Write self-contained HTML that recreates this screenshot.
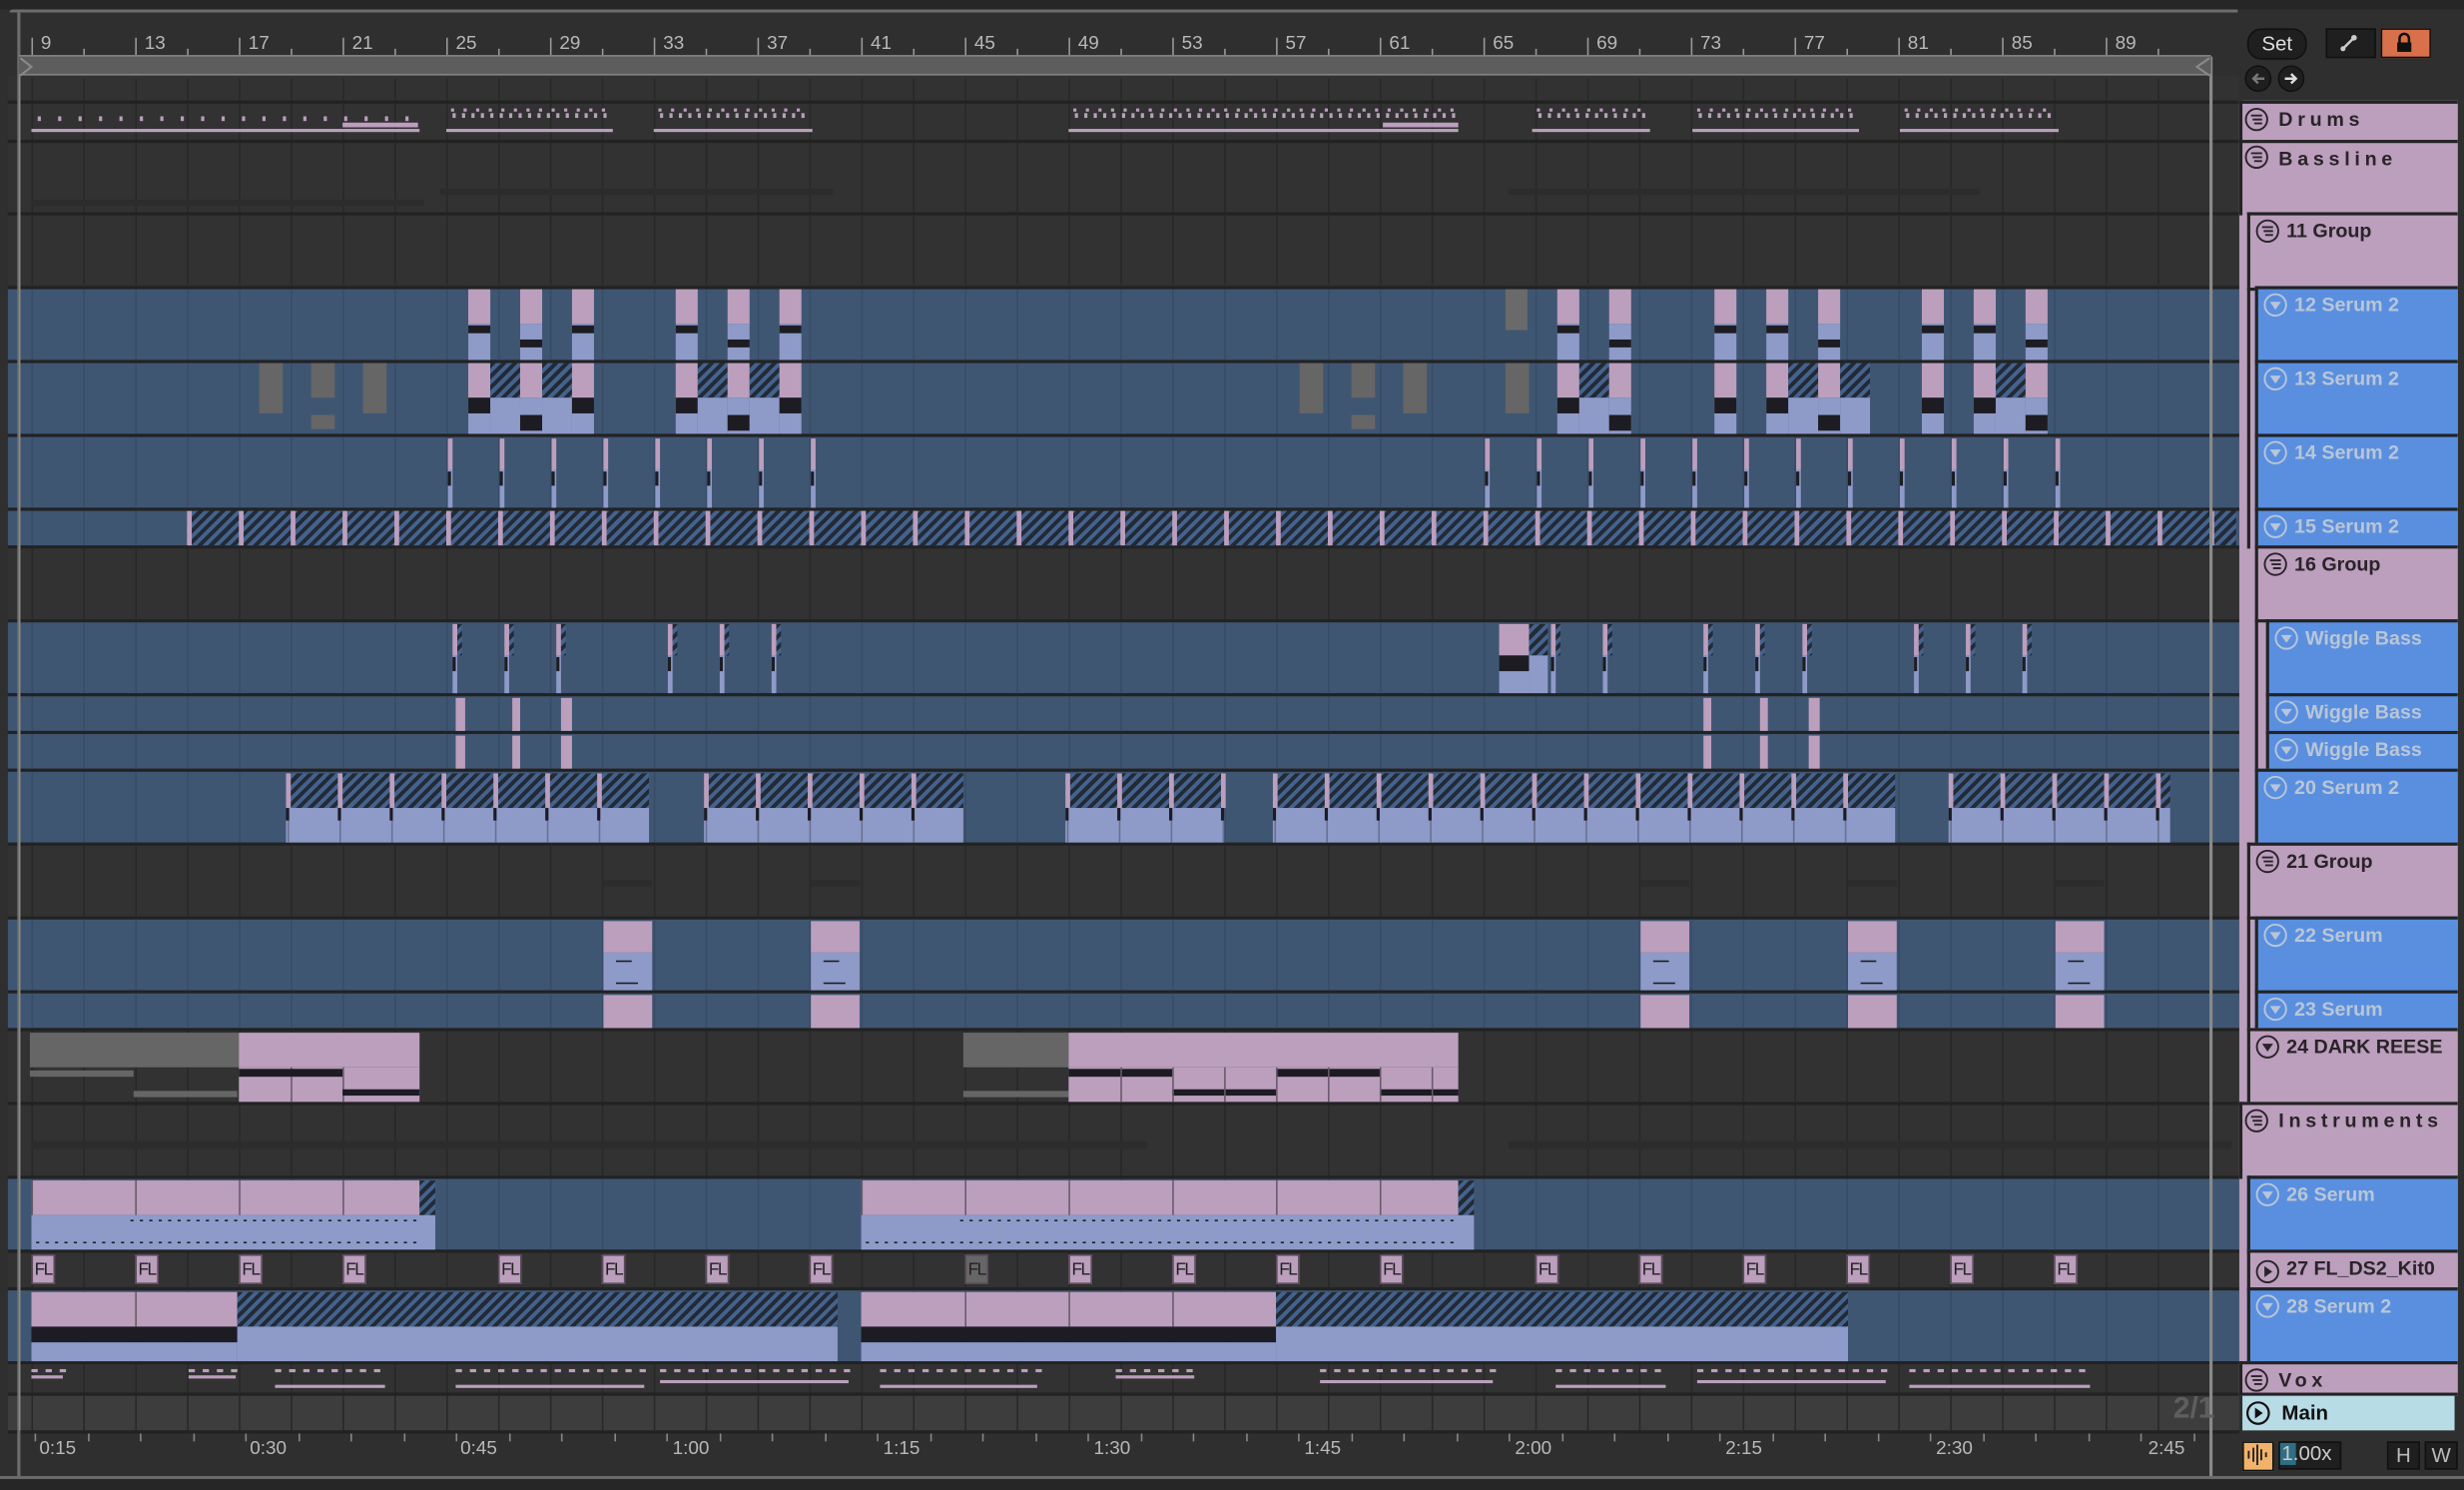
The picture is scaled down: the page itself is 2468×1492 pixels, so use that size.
<!DOCTYPE html>
<html><head><meta charset="utf-8">
<style>
html,body{margin:0;padding:0;background:#2b2b2b;overflow:hidden;width:2468px;height:1492px}
#s{position:absolute;left:0;top:0;width:1568px;height:948px;transform:scale(1.57398);transform-origin:0 0;background:#2f2f2f;font-family:"Liberation Sans",sans-serif;overflow:hidden}
.a{position:absolute}
.rl{position:absolute;top:20px;font-size:12px;color:#b8b8b8}
.tl{position:absolute;top:914px;font-size:12px;color:#b8b8b8}
.h{position:absolute;box-sizing:border-box;border-top:2px solid #232323;border-left:2px solid #232323;font-size:12.5px;font-weight:bold;white-space:nowrap;padding-left:23px;padding-top:3px}
.pk{background:#bb9fbd;color:#2a2328}
.bl{background:#5a8fe0;color:#b9c6d6}
.sp{letter-spacing:3px}
</style></head><body>
<div id="s">
<div class="a" style="left:0;top:0;width:1568px;height:6px;background:#262626"></div>
<div class="a" style="left:6px;top:6px;width:1418px;height:2px;background:#6d6d6d;border-radius:4px 0 0 0"></div>
<div id="lanes"></div>
<!-- loop bar -->
<div class="a" style="left:12px;top:35px;width:1395px;height:11px;background:#5d5d5d;border-top:1.5px solid #848484;border-bottom:1.5px solid #848484"></div>
<svg class="a" style="left:12px;top:36px" width="10" height="14"><path d="M1 1 L8 6.5 L1 12" fill="none" stroke="#8a8a8a" stroke-width="1.3"/></svg>
<svg class="a" style="left:1396px;top:36px" width="12" height="14"><path d="M10 1 L2 6.5 L10 12" fill="none" stroke="#8a8a8a" stroke-width="1.3"/></svg>
<div class="rl" style="left:26px">9</div><div class="rl" style="left:92px">13</div><div class="rl" style="left:158px">17</div><div class="rl" style="left:224px">21</div><div class="rl" style="left:290px">25</div><div class="rl" style="left:356px">29</div><div class="rl" style="left:422px">33</div><div class="rl" style="left:488px">37</div><div class="rl" style="left:554px">41</div><div class="rl" style="left:620px">45</div><div class="rl" style="left:686px">49</div><div class="rl" style="left:752px">53</div><div class="rl" style="left:818px">57</div><div class="rl" style="left:884px">61</div><div class="rl" style="left:950px">65</div><div class="rl" style="left:1016px">69</div><div class="rl" style="left:1082px">73</div><div class="rl" style="left:1148px">77</div><div class="rl" style="left:1214px">81</div><div class="rl" style="left:1280px">85</div><div class="rl" style="left:1346px">89</div>
<div class="tl" style="left:25px">0:15</div><div class="tl" style="left:159px">0:30</div><div class="tl" style="left:293px">0:45</div><div class="tl" style="left:428px">1:00</div><div class="tl" style="left:562px">1:15</div><div class="tl" style="left:696px">1:30</div><div class="tl" style="left:830px">1:45</div><div class="tl" style="left:964px">2:00</div><div class="tl" style="left:1098px">2:15</div><div class="tl" style="left:1232px">2:30</div><div class="tl" style="left:1367px">2:45</div>
<div class="a" style="left:1383px;top:886px;font-size:19px;font-weight:bold;color:#5e5e5e">2/1</div>
<div id="fl"></div>
<div class="a" style="left:1425px;top:64px;width:139px;height:824px;background:#bb9fbd"></div>
<div class="h pk sp" style="left:1425px;top:64px;width:139px;height:25px">Drums</div>
<div class="h pk sp" style="left:1425px;top:89px;width:139px;height:48px">Bassline</div>
<div class="h pk" style="left:1430px;top:135px;width:134px;height:48px">11 Group</div>
<div class="h pk" style="left:1430px;top:183px;width:134px;height:166px;padding:0"></div>
<div class="h bl" style="left:1435px;top:182px;width:129px;height:49px">12 Serum 2</div>
<div class="h bl" style="left:1435px;top:229px;width:129px;height:49px">13 Serum 2</div>
<div class="h bl" style="left:1435px;top:276px;width:129px;height:49px">14 Serum 2</div>
<div class="h bl" style="left:1435px;top:323px;width:129px;height:26px">15 Serum 2</div>
<div class="h pk" style="left:1435px;top:347px;width:129px;height:49px">16 Group</div>
<div class="h pk" style="left:1435px;top:394px;width:129px;height:97px;padding:0"></div>
<div class="h bl" style="left:1442px;top:394px;width:122px;height:49px">Wiggle Bass</div>
<div class="h bl" style="left:1442px;top:441px;width:122px;height:26px">Wiggle Bass</div>
<div class="h bl" style="left:1442px;top:465px;width:122px;height:26px">Wiggle Bass</div>
<div class="h bl" style="left:1435px;top:489px;width:129px;height:49px">20 Serum 2</div>
<div class="h pk" style="left:1430px;top:536px;width:134px;height:49px">21 Group</div>
<div class="h pk" style="left:1430px;top:583px;width:134px;height:73px;padding:0"></div>
<div class="h bl" style="left:1435px;top:583px;width:129px;height:49px">22 Serum</div>
<div class="h bl" style="left:1435px;top:630px;width:129px;height:26px">23 Serum</div>
<div class="h pk" style="left:1430px;top:654px;width:134px;height:49px">24 DARK REESE</div>
<div class="h pk sp" style="left:1425px;top:701px;width:139px;height:49px">Instruments</div>
<div class="h pk" style="left:1430px;top:748px;width:134px;height:120px;padding:0"></div>
<div class="h bl" style="left:1430px;top:748px;width:134px;height:49px">26 Serum</div>
<div class="h pk" style="left:1430px;top:795px;width:134px;height:26px">27 FL_DS2_Kit0</div>
<div class="h bl" style="left:1430px;top:819px;width:134px;height:49px">28 Serum 2</div>
<div class="h pk sp" style="left:1425px;top:866px;width:139px;height:22px;overflow:hidden">Vox</div>
<div class="a" style="left:1425px;top:886px;width:139px;height:2px;background:#232323"></div>
<div class="a" style="left:1427px;top:888px;width:135px;height:22px;background:#b8dce6;font-size:13px;font-weight:bold;color:#111;padding-left:25px;box-sizing:border-box;line-height:22px">Main</div>
<svg class="a" style="left:1429px;top:891px" width="16" height="16"><circle cx="8" cy="8" r="6.8" fill="none" stroke="#111" stroke-width="1.4"/><path d="M6 4.5 L11 8 L6 11.5Z" fill="#111"/></svg>
<div id="icons"></div>
<div class="a" style="left:1430px;top:18px;width:36px;height:18px;border-radius:9px;background:#1f1f1f;border:1px solid #111;color:#ddd;font-size:13px;text-align:center;line-height:18px">Set</div>
<div class="a" style="left:1480px;top:18px;width:30px;height:17px;background:#1f1f1f;border:1px solid #111"></div>
<svg class="a" style="left:1488px;top:20px" width="14" height="14"><path d="M3 11 L10 4" stroke="#ccc" stroke-width="1.6"/><circle cx="3" cy="11" r="1.6" fill="#ccc"/><circle cx="10" cy="4" r="1.8" fill="#ccc"/></svg>
<div class="a" style="left:1515px;top:18px;width:30px;height:17px;background:#d7704b;border:1px solid #111"></div>
<svg class="a" style="left:1523px;top:19px" width="14" height="16"><path d="M4 8 V5.5 A3 3 0 0 1 10 5.5 V8" fill="none" stroke="#111" stroke-width="1.6"/><rect x="2.5" y="8" width="9" height="6" fill="#111"/></svg>
<svg class="a" style="left:1428px;top:41px" width="42" height="18"><circle cx="9" cy="9" r="8" fill="#1f1f1f" stroke="#111"/><circle cx="30" cy="9" r="8" fill="#1f1f1f" stroke="#111"/><path d="M13 9 H6 M9 6 L6 9 L9 12" stroke="#777" stroke-width="1.6" fill="none"/><path d="M26 9 H33 M30 6 L33 9 L30 12" stroke="#ddd" stroke-width="1.6" fill="none"/></svg>
<div class="a" style="left:1427px;top:917px;width:18px;height:17px;background:#f1b36a;border:1px solid #111"></div>
<svg class="a" style="left:1429px;top:918px" width="15" height="15"><path d="M2 5v5M5 3v9M7.5 1v13M10 4v7M13 6v3" stroke="#222" stroke-width="1.2"/></svg>
<div class="a" style="left:1450px;top:917px;width:38px;height:16px;background:#1f1f1f;border:1px solid #111"></div>
<div class="a" style="left:1451px;top:918px;width:10px;height:14px;background:#2f6f86"></div>
<div class="a" style="left:1452px;top:917px;font-size:13px;color:#ccc">1.00x</div>
<div class="a" style="left:1519px;top:917px;width:19px;height:16px;background:#1f1f1f;border:1px solid #111;color:#bbb;font-size:13px;text-align:center;line-height:16px">H</div>
<div class="a" style="left:1543px;top:917px;width:19px;height:16px;background:#1f1f1f;border:1px solid #111;color:#bbb;font-size:13px;text-align:center;line-height:16px">W</div>
<div class="a" style="left:0;top:939px;width:1568px;height:2px;background:#6a6a6a"></div>
<div class="a" style="left:0;top:941px;width:1568px;height:7px;background:#262626"></div>
</div>
<script>
var L=document.getElementById('lanes'),h='';
function d(x,y,w,ht,bg,ex){h+='<div class="a" style="left:'+x+'px;top:'+y+'px;width:'+w+'px;height:'+ht+'px;background:'+bg+';'+(ex||'')+'"></div>';}
var HA='repeating-linear-gradient(135deg,#222a36 0 2.5px,#44628c 2.5px 5px)';
var P='#bb9fbd',V='#8e9ac8',K='#1c1c22';
d(5,8,1420,932,'#2f2f2f');
d(5,48,1420,16,'#323232');
var T=[[64,25,0],[89,46,0],[135,46,0],[182,47,1],[229,47,1],[276,47,1],[323,24,1],[347,47,0],[394,47,1],[441,24,1],[465,24,1],[489,47,1],[536,47,0],[583,47,1],[630,24,1],[654,47,0],[701,47,0],[748,47,1],[795,24,0],[819,47,1],[866,20,0],[886,24,2]];
T.forEach(function(t){d(5,t[0],1420,2,'#222');d(5,t[0]+2,1420,t[1]-2,t[2]==1?'#3f5673':(t[2]==2?'#3d3d3d':'#323232'));});
d(5,910,1420,2,'#222');
for(var x=20;x<1423;x+=33){for(var i=0;i<T.length;i++){var t=T[i];d(x,t[0]+2,1,t[1]-2,t[2]==1?'#384c66':'#282828');}d(x,50,1,14,'#282828');}
for(var x=20;x<1400;x+=33)d(x,(((x-20)/33)%2==0)?24:31,1,((x-20)/33)%2==0?12:5,'#999');
for(var x=22;x<1400;x+=33.5)d(x,912,1,5,'#888');
[[20,267],[284,390],[416,517],[680,928],[975,1050],[1077,1183],[1209,1310]].forEach(function(r){d(r[0],82,r[1]-r[0],2,P);for(var x=r[0]+4;x<r[1]-2;x+=(r[0]>250?6:13))d(x,(r[0]>250?72:74),2,3,P);if(r[0]>250)for(var x=r[0]+3;x<r[1]-2;x+=8)d(x,69,2,2,P);});
d(218,78,48,3,P);d(880,78,48,3,P);
d(20,127,250,4,'#2c2c2c');d(280,120,250,4,'#2c2c2c');d(960,120,300,4,'#2c2c2c');
var R=[298,331,364,430,463,496,991,1024,1091,1124,1157,1223,1256,1289];
R.forEach(function(x,i){d(x,184,14,22,P);d(x,206,14,23,V);d(x,i%3==1?216:207,14,5,K);});
d(958,184,14,26,'#6a6a6a');
R.forEach(function(x,i){d(x,231,14,22,P);d(x,253,14,23,V);d(x,i%3==1?264:253,14,10,K);if(i%3!=2&&!(x==496||x==1024||x==1289))d(x+14,231,19,22,HA),d(x+14,253,19,23,V);});
[165,198,231].forEach(function(x,i){d(x,231,15,i==1?22:32,'#666');});d(198,264,15,9,'#666');
[827,860,893].forEach(function(x,i){d(x,231,15,i==1?22:32,'#666');});d(860,264,15,9,'#666');d(958,231,15,32,'#666');
[285,318,351,384,417,450,483,516,945,978,1011,1044,1077,1110,1143,1176,1209,1242,1275,1308].forEach(function(x){d(x,279,3,20,P);d(x,299,3,24,V);d(x,300,2,9,K);});
d(119,325,1304,22,HA);for(var x=119;x<1420;x+=33)d(x,325,3,22,P);
[288,321,354,425,458,491,987,1020,1084,1117,1147,1218,1251,1287].forEach(function(x){d(x,397,3,20,P);d(x,417,3,24,V);d(x,418,2,9,K);d(x+3,397,3,20,HA);});
d(954,397,19,20,P);d(954,417,19,24,V);d(954,417,19,10,K);d(973,397,12,20,HA);d(973,417,12,24,V);
[[290,6],[326,5],[357,7],[1084,5],[1120,5],[1151,7]].forEach(function(a){d(a[0],444,a[1],21,P);d(a[0],468,a[1],21,P);});
[[182,413],[448,613],[678,779],[810,1206],[1240,1381]].forEach(function(r){d(r[0],492,r[1]-r[0],22,HA);d(r[0],514,r[1]-r[0],22,V);for(var x=r[0];x<r[1];x+=33){d(x,492,3,22,P);d(x+1,514,1,22,'#6a7090');d(x,514,2,8,K);}});
[384,516,1044,1176,1308].forEach(function(x){d(x,560,31,4,'#2c2c2c');d(x,586,31,20,P);d(x,606,31,24,V);d(x+8,611,10,1,K);d(x+8,625,14,1,K);d(x,633,31,21,P);});
d(19,657,133,22,'#666');d(19,681,66,4,'#666');d(85,694,66,4,'#666');d(152,657,115,22,P);d(152,679,115,22,P);d(218,679,1,22,'#6a5a6a');d(185,679,1,22,'#6a5a6a');d(152,680,66,5,K);d(218,693,49,4,K);
d(613,657,67,22,'#666');d(613,694,67,4,'#666');d(680,657,248,22,P);d(680,679,248,22,P);d(680,680,66,5,K);d(746,693,66,4,K);d(812,680,66,5,K);d(878,693,50,4,K);
[713,746,779,812,845,878,911].forEach(function(x){d(x,679,1,22,'#6a5a6a');});
d(20,726,710,5,'#2c2c2c');d(960,726,460,5,'#2c2c2c');
[[20,267],[548,928]].forEach(function(r){d(r[0],751,r[1]-r[0],22,P);d(r[0],773,r[1]-r[0]+10,22,V);d(r[1],751,10,22,HA);for(var x=r[0];x<r[1];x+=66)d(x,751,1,22,'#6a5a6a');for(var x=r[0]+3;x<r[1];x+=6){d(x,790,2,1,K);if(x>r[0]+60)d(x,776,2,1,K);}});
d(20,822,131,22,P);d(20,844,131,10,K);d(20,854,131,12,V);d(86,822,1,22,'#6a5a6a');
d(151,822,382,22,HA);d(151,844,382,22,V);
d(548,822,264,22,P);d(548,844,264,10,K);d(548,854,264,12,V);[614,680,746].forEach(function(x){d(x,822,1,22,'#6a5a6a');});
d(812,822,364,22,HA);d(812,844,364,22,V);
[[20,40,875],[120,150,875],[175,245,881],[290,410,881],[420,540,878],[560,660,881],[710,760,875],[840,950,878],[990,1060,881],[1080,1200,878],[1215,1330,881]].forEach(function(r){d(r[0],r[2],r[1]-r[0],1.5,P);for(var x=r[0];x<r[1];x+=9)d(x,871,4,1.5,P);});
d(11,8,2,932,'#6d6d6d');d(1406,36,2,904,'#8a8a8a');d(12,48,1,862,'#8a8a8a');
L.innerHTML=h;
var f='';
[20,86,152,218,317,383,449,515,614,680,746,812,878,977,1043,1109,1175,1241,1307].forEach(function(x){f+='<div class="a" style="left:'+x+'px;top:798px;width:15px;height:19px;background:'+(x==614?'#666':'#bb9fbd')+';border:1px solid #5a4a5a;box-sizing:border-box;font-size:11px;color:#222;line-height:18px;letter-spacing:-1px;padding-left:1px">FL</div>';});
document.getElementById('fl').innerHTML=f;
var ic='';
function gi(x,y){ic+='<svg class="a" style="left:'+x+'px;top:'+y+'px" width="16" height="16"><circle cx="8" cy="8" r="6.8" fill="none" stroke="#2a2328" stroke-width="1.2"/><path d="M4.5 5.5h7M5.5 8h6M6.5 10.5h5" stroke="#2a2328" stroke-width="1.2"/></svg>';}
function bi(x,y){ic+='<svg class="a" style="left:'+x+'px;top:'+y+'px" width="16" height="16"><circle cx="8" cy="8" r="6.8" fill="none" stroke="#b9c6d6" stroke-width="1.2"/><path d="M4.5 6 H11.5 L8 11Z" fill="#b9c6d6"/></svg>';}
function pi(x,y){ic+='<svg class="a" style="left:'+x+'px;top:'+y+'px" width="16" height="16"><circle cx="8" cy="8" r="6.8" fill="none" stroke="#2a2328" stroke-width="1.2"/><path d="'+(y>800?'M6 4.5 L11 8 L6 11.5Z':'M4.5 6 H11.5 L8 11Z')+'" fill="#2a2328"/></svg>';}
gi(1428,68);gi(1428,92);gi(1435,139);bi(1440,186);bi(1440,233);bi(1440,280);bi(1440,327);gi(1440,351);bi(1447,398);bi(1447,445);bi(1447,469);bi(1440,493);gi(1435,540);bi(1440,587);bi(1440,634);pi(1435,658);gi(1428,705);bi(1435,752);pi(1435,801);bi(1435,823);gi(1428,870);
document.getElementById('icons').innerHTML=ic;
</script>
</body></html>
